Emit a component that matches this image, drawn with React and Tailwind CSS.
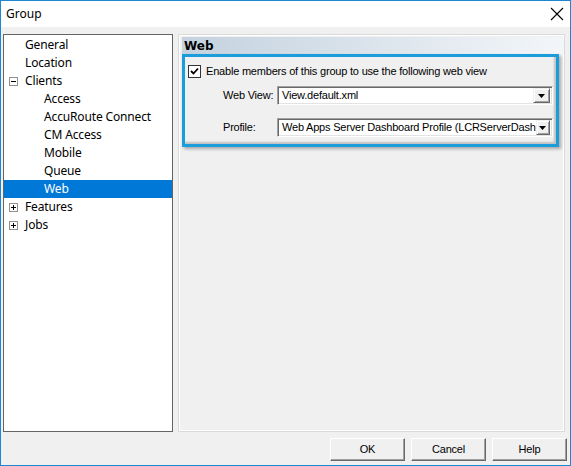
import { useState } from 'react'

const tree = [
  { label: 'General', level: 0 },
  { label: 'Location', level: 0 },
  { label: 'Clients', level: 0, toggle: 'minus' },
  { label: 'Access', level: 1 },
  { label: 'AccuRoute Connect', level: 1 },
  { label: 'CM Access', level: 1 },
  { label: 'Mobile', level: 1 },
  { label: 'Queue', level: 1 },
  { label: 'Web', level: 1 },
  { label: 'Features', level: 0, toggle: 'plus' },
  { label: 'Jobs', level: 0, toggle: 'plus' },
]

function ToggleBox({ kind }) {
  return (
    <svg width="9" height="9" viewBox="0 0 9 9" className="block">
      <rect x="0.5" y="0.5" width="8" height="8" fill="#fff" stroke="#919191" />
      <line x1="2" y1="4.5" x2="7" y2="4.5" stroke="#000" />
      {kind === 'plus' && <line x1="4.5" y1="2" x2="4.5" y2="7" stroke="#000" />}
    </svg>
  )
}

function DropArrow() {
  return (
    <div className="w-[17px] h-[15px] bg-[#f0f0f0] border border-t-[#f0f0f0] border-l-[#f0f0f0] border-r-[#696969] border-b-[#696969] shadow-[inset_1px_1px_0_#fff,inset_-1px_-1px_0_#a0a0a0] flex items-center justify-center">
      <svg width="7" height="4" viewBox="0 0 7 4" className="block">
        <polygon points="0,0 7,0 3.5,4" fill="#000" />
      </svg>
    </div>
  )
}

function Combo({ value }) {
  return (
    <div className="w-[276px] h-[19px] bg-white border border-t-[#a0a0a0] border-l-[#a0a0a0] border-r-white border-b-white shadow-[inset_1px_1px_0_#696969,inset_-1px_-1px_0_#e3e3e3] flex items-center pl-[4px] pr-[2px]">
      <span className="flex-1 whitespace-nowrap text-black">{value}</span>
      <DropArrow />
    </div>
  )
}

function Button({ children }) {
  return (
    <button className="w-[75px] h-[23px] bg-[#f0f0f0] border border-t-white border-l-white border-r-[#696969] border-b-[#696969] shadow-[inset_-1px_-1px_0_#a0a0a0] text-black flex items-center justify-center">
      {children}
    </button>
  )
}

export default function App() {
  const [selected, setSelected] = useState('Web')
  const [enabled, setEnabled] = useState(true)

  return (
    <div className="w-[571px] h-[466px] border border-[#1e87d3] bg-[#f0f0f0] flex flex-col font-['Liberation_Sans',Arial,sans-serif] text-[11px] tracking-[-0.2px] text-black select-none">
      {/* title bar */}
      <div className="h-[26px] bg-white flex items-center justify-between pl-[5px] pr-[6px] font-['Noto_Sans',sans-serif] text-[12px] tracking-normal">
        <span>Group</span>
        <svg width="14" height="14" viewBox="0 0 14 14" className="block">
          <path d="M1 1 L13 13 M13 1 L1 13" stroke="#000" strokeWidth="1.1" />
        </svg>
      </div>

      <div className="flex mt-[7px] pl-[2px] gap-[5px]">
        {/* tree */}
        <div className="w-[170px] h-[398px] bg-white border border-[#646464] pt-[1px] font-['Noto_Sans',sans-serif] text-[12px] tracking-[-0.15px]">
          {tree.map((item) => {
            const active = item.label === selected
            return (
              <div
                key={item.label}
                onClick={() => setSelected(item.label)}
                className={`h-[18px] flex items-center ${active ? 'bg-[#0078d7] text-white' : ''}`}
              >
                <div className="w-[21px] flex justify-start pl-[5px]">
                  {item.toggle && <ToggleBox kind={item.toggle} />}
                </div>
                <span className={item.level === 1 ? 'pl-[19px]' : ''}>{item.label}</span>
              </div>
            )
          })}
        </div>

        {/* page */}
        <div className="w-[387px] h-[398px] border border-[#dadada] shadow-[inset_1px_1px_0_#fff,inset_-1px_-1px_0_#fff] pt-[2px] pl-[3px]">
          <div className="w-[382px] h-[17px] bg-gradient-to-r from-[#c4d2df] to-[#f3f6f9] flex items-center pl-[2px] font-['DejaVu_Sans',Verdana,sans-serif] font-bold text-[12px] tracking-normal">
            Web
          </div>
          <div className="w-[377px] h-[93px] border-[3px] border-[#1b9ddb] shadow-[2px_2px_3px_rgba(0,0,0,0.3),inset_-2px_-2px_2px_rgba(0,0,0,0.2)] pt-[8px] pl-[3px]">
            <div className="flex items-center h-[13px]" onClick={() => setEnabled(!enabled)}>
              <div className="w-[13px] h-[13px] bg-white border border-[#333] flex items-center justify-center">
                {enabled && (
                  <svg width="9" height="9" viewBox="0 0 9 9" className="block">
                    <path d="M1 4 L3.5 6.5 L8 1.5" stroke="#000" strokeWidth="1.8" fill="none" />
                  </svg>
                )}
              </div>
              <span className="ml-[5px]">Enable members of this group to use the following web view</span>
            </div>
            <div className="flex items-center mt-[8px] pl-[35px]">
              <span className="w-[54px]">Web View:</span>
              <Combo value="View.default.xml" />
            </div>
            <div className="flex items-center mt-[13px] pl-[35px]">
              <span className="w-[54px]">Profile:</span>
              <Combo value="Web Apps Server Dashboard Profile (LCRServerDash" />
            </div>
          </div>
        </div>
      </div>

      <div className="flex justify-end gap-[6px] mt-[6px] pr-[3px]">
        <Button>OK</Button>
        <Button>Cancel</Button>
        <Button>Help</Button>
      </div>
    </div>
  )
}
